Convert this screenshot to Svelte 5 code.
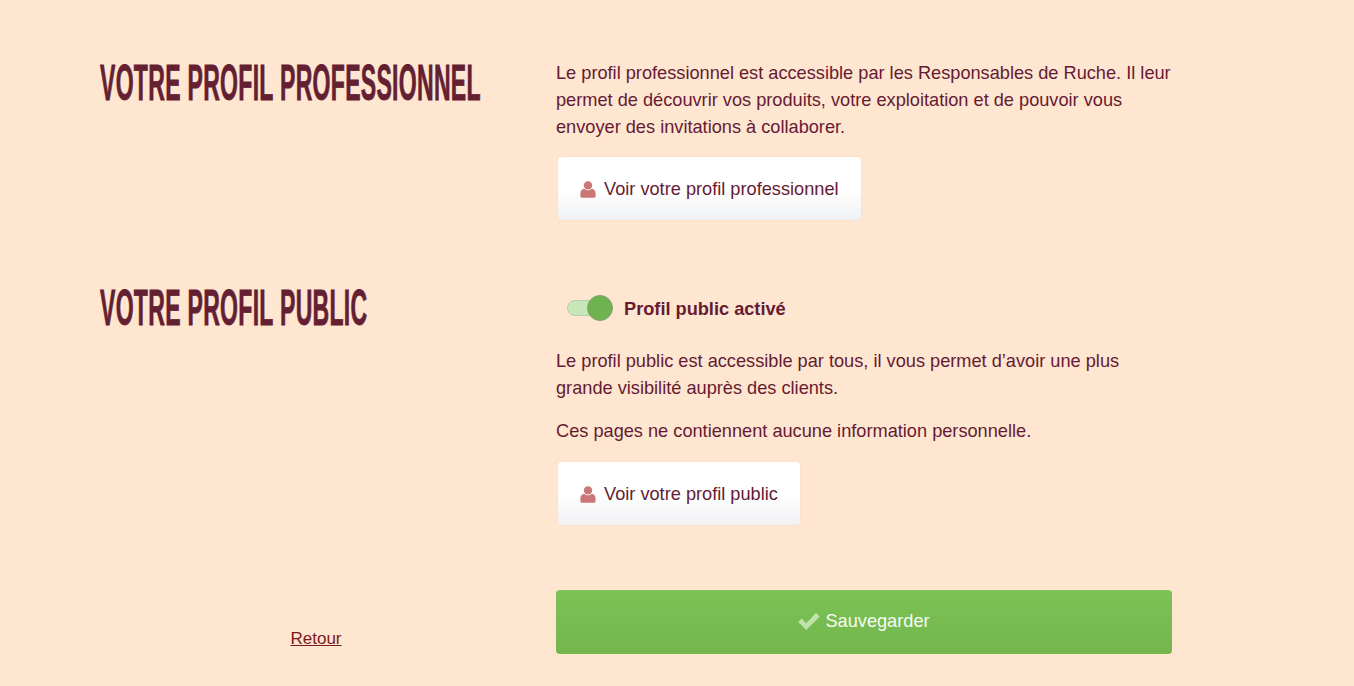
<script>
  let isPublic = $state(true);
</script>

{#snippet userIcon()}
  <svg class="user" viewBox="0 0 16 17" aria-hidden="true">
    <circle cx="8" cy="4.4" r="4.2" />
    <path d="M4 7.8C2 8.2 .4 9.6.4 12.4v2.6c0 1.1.8 1.8 1.8 1.8h11.6c1 0 1.8-.7 1.8-1.8v-2.6c0-2.8-1.6-4.2-3.6-4.6-1 .9-2.4 1.5-4 1.5s-3-.6-4-1.5z" />
  </svg>
{/snippet}

<main class="page">
  <section class="row first">
    <h2><span>VOTRE PROFIL PROFESSIONNEL</span></h2>
    <div class="content">
      <p class="intro">Le profil professionnel est accessible par les Responsables de Ruche. Il leur permet de découvrir vos produits, votre exploitation et de pouvoir vous envoyer des invitations à collaborer.</p>
      <button class="btn" type="button">{@render userIcon()}Voir votre profil professionnel</button>
    </div>
  </section>

  <section class="row second">
    <h2><span>VOTRE PROFIL PUBLIC</span></h2>
    <div class="content">
      <label class="toggle">
        <input type="checkbox" bind:checked={isPublic} />
        <span class="track"><span class="knob"></span></span>
        <strong>Profil public activé</strong>
      </label>
      <p>Le profil public est accessible par tous, il vous permet d’avoir une plus grande visibilité auprès des clients.</p>
      <p>Ces pages ne contiennent aucune information personnelle.</p>
      <button class="btn" type="button">{@render userIcon()}Voir votre profil public</button>
    </div>
  </section>

  <section class="row actions">
    <div class="back"><a href="#retour">Retour</a></div>
    <button class="save" type="button">
      <svg class="check" viewBox="0 0 22 18" aria-hidden="true">
        <path d="M8.2 18 .2 10l3.4-3.4 4.6 4.6L18 .8l3.8 3.6z" />
      </svg>Sauvegarder
    </button>
  </section>
</main>

<style>
  :global(body) {
    margin: 0;
    background: #ffe6d0;
  }
  .page {
    box-sizing: border-box;
    height: 686px;
    overflow: hidden;
    padding: 60px 182px 0 100px;
    color: #651b33;
    font-family: "Liberation Sans", Arial, sans-serif;
    font-size: 18.2px;
    line-height: 27px;
  }
  .row {
    display: grid;
    grid-template-columns: 432px 616px;
    column-gap: 24px;
  }
  .second {
    margin-top: 64px;
  }
  .actions {
    margin-top: 64px;
  }
  h2 {
    margin: -1px 0 0;
    font-family: "Liberation Sans Narrow", "Liberation Sans", sans-serif;
    font-size: 47px;
    line-height: 48px;
    font-weight: 700;
    color: #632033;
    white-space: nowrap;
  }
  h2 span {
    display: inline-block;
    transform-origin: left center;
    transform: scale(0.49, 1.05);
    letter-spacing: 0.6px;
    -webkit-text-stroke: 0.8px #632033;
  }
  p {
    margin: 0 0 16px;
  }
  .intro {
    margin-bottom: 15px;
  }
  .btn {
    display: inline-flex;
    align-items: center;
    gap: 8px;
    box-sizing: border-box;
    height: 65px;
    margin-left: 1px;
    padding: 2px 22px 0;
    border: 1px solid #ffe0c8;
    border-radius: 4px;
    background: linear-gradient(#fff 50%, #f0f1f4);
    color: #651b33;
    font: inherit;
  }
  .user {
    width: 16px;
    height: 17px;
    fill: #cc7777;
  }
  .toggle {
    display: flex;
    align-items: center;
    height: 27px;
    margin: 0 0 25px;
    padding: 11px 0 0 11px;
  }
  .toggle input {
    display: none;
  }
  .track {
    position: relative;
    top: -2px;
    width: 42px;
    height: 14px;
    margin-right: 13px;
    border: 1px solid #b5cfa6;
    border-radius: 8px;
    background: #c9e6b8;
  }
  .knob {
    position: absolute;
    top: -6px;
    right: -3px;
    box-sizing: border-box;
    width: 26px;
    height: 26px;
    border: 1px solid #8a9f78;
    border-radius: 50%;
    background: #6db350;
  }
  .back {
    align-self: end;
    text-align: center;
    font-size: 17px;
    line-height: 20px;
    margin-bottom: 5px;
  }
  .back a {
    color: #7a1a1a;
  }
  .save {
    height: 64px;
    padding-bottom: 2px;
    border: 0;
    border-radius: 4px;
    background: linear-gradient(#7dc255, #72b64d);
    color: #f6fbf2;
    font: inherit;
  }
  .check {
    width: 22px;
    height: 18px;
    margin-right: 5px;
    vertical-align: -3px;
    fill: #c0e2ab;
  }
</style>
